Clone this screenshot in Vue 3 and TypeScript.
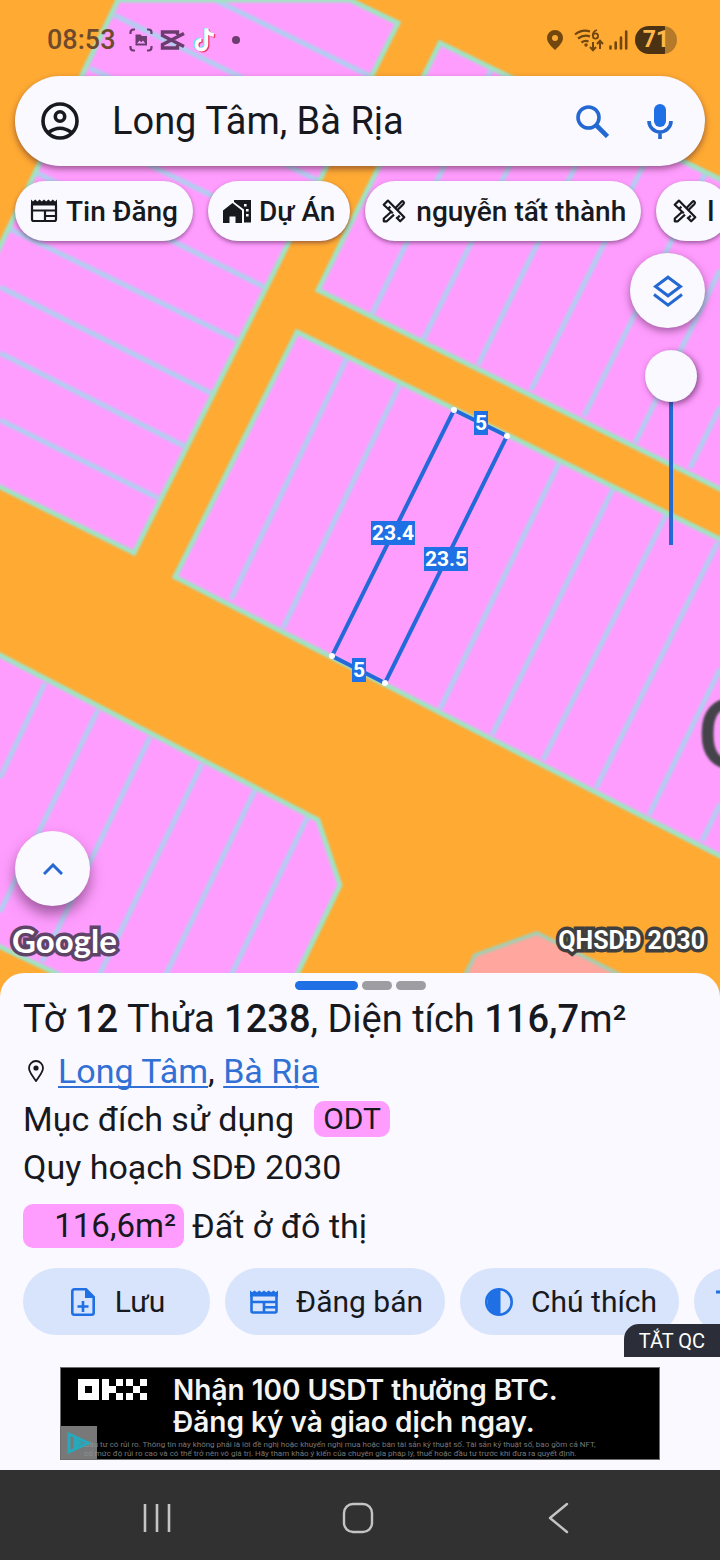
<script setup lang="ts">
import { ref } from 'vue'

type Line = [number, number, number, number]

const place = ref('Long Tâm, Bà Rịa')
const opacity = ref(100)

const filters = [
  { icon: 'news', label: 'Tin Đăng' },
  { icon: 'home', label: 'Dự Án' },
  { icon: 'tools', label: 'nguyễn tất thành' },
  { icon: 'tools', label: 'l' },
]

const blocks = [
  '118,0 350,0 398,23 134,553 -10,482 -10,267',
  '440,43 730,184 730,494 318,290',
  '297,332 730,544 730,861 175,577',
  '-10,650 318,820 340,885 286,997 106,997 -10,942',
]

const parcelLines: Line[] = [
  [0, 420, 158, 498],
  [0, 353, 184, 446],
  [0, 287, 211, 393],
  [10, 229, 237, 340],
  [37, 173, 264, 287],
  [62, 122, 290, 234],
  [90, 68, 317, 180],
  [114, 15, 343, 127],
  [215, 0, 370, 76],
  [372, 314, 492, 68],
  [423, 340, 545, 94],
  [478, 365, 598, 120],
  [531, 390, 653, 146],
  [584, 416, 706, 172],
  [635, 443, 720, 270],
  [690, 468, 720, 407],
  [347, 358, 231, 599],
  [400, 384, 283, 628],
  [559, 463, 440, 709],
  [613, 489, 492, 735],
  [666, 515, 543, 760],
  [718, 542, 596, 788],
  [720, 669, 649, 815],
  [720, 804, 702, 841],
  [45, 683, 0, 778],
  [98, 710, 0, 912],
  [150, 737, 42, 962],
  [202, 764, 92, 990],
  [255, 790, 157, 993],
  [308, 816, 222, 994],
]

const corners = [
  [454, 410],
  [507, 436],
  [385, 683],
  [332, 656],
]

const sideLabels = [
  { text: '5', x: 481, y: 423, w: 14 },
  { text: '23.4', x: 393, y: 533, w: 44 },
  { text: '23.5', x: 446, y: 559, w: 44 },
  { text: '5', x: 359, y: 670, w: 14 },
]
</script>

<template>
  <div class="screen">
    <main class="map">
      <svg class="canvas" viewBox="0 0 720 997" preserveAspectRatio="xMinYMin slice" role="img" aria-label="Bản đồ quy hoạch">
        <rect width="720" height="997" fill="#ffaa33" />
        <g class="plan">
          <polygon v-for="b in blocks" :key="b" :points="b" class="block" />
          <polygon points="454,997 475,955 537,933 664,997" fill="#ffa69e" stroke="#a8cdb0" stroke-width="4" />
          <line v-for="(l, i) in parcelLines" :key="i" :x1="l[0]" :y1="l[1]" :x2="l[2]" :y2="l[3]" class="parcel" />
          <polygon v-for="b in blocks" :key="'e' + b" :points="b" class="edge" />
        </g>
        <text x="697" y="768" class="street">O</text>
        <polygon points="454,410 507,436 385,683 332,656" fill="none" stroke="#2369da" stroke-width="4" />
        <circle v-for="c in corners" :key="c[0]" :cx="c[0]" :cy="c[1]" r="3" fill="#fff" />
        <g v-for="s in sideLabels" :key="s.x">
          <rect :x="s.x - s.w / 2" :y="s.y - 12" :width="s.w" height="24" fill="#1f6fe5" />
          <text :x="s.x" :y="s.y + 7" class="side">{{ s.text }}</text>
        </g>
      </svg>

      <header class="status">
        <span class="clock">08:53</span>
        <svg class="s-capture" viewBox="0 0 24 24" fill="none" stroke="currentColor" stroke-width="2.2">
          <path d="M1.500 6V4.500a3 3 0 0 1 3-3H6M18 1.500h1.500a3 3 0 0 1 3 3V6M22.500 18v1.500a3 3 0 0 1-3 3H18M6 22.500H4.500a3 3 0 0 1-3-3V18" />
          <path d="M6.500 6.500h5l1.500 1.500h5v9.500H6.500z" fill="currentColor" stroke="none" />
          <path d="M8 15.500l2.500-3 1.800 1.800 1.700-1.800 2.300 3z" fill="#ff9dff" stroke="none" />
        </svg>
        <svg class="s-capcut" viewBox="0 0 24 20" fill="none" stroke="currentColor" stroke-width="3.400">
          <path d="M17 5V2H2v3.500l21.500 11M17 15v3H2v-3.500L23.500 3.500" />
        </svg>
        <svg class="s-tiktok" viewBox="0 0 24 26" fill="none" stroke-width="3.600">
          <path d="M13.200 1.500v15.500a4.700 4.700 0 1 1-4.700-4.700M13.200 1.500q.8 5.500 7.300 6.300" stroke="#5fe6ea" transform="translate(-.8 -.6)" />
          <path d="M14.200 1.500v15.500a4.700 4.700 0 1 1-4.700-4.700M14.200 1.500q.8 5.500 7.300 6.300" stroke="#ee3e68" transform="translate(.8 1)" />
          <path d="M13.700 1.500v15.500a4.700 4.700 0 1 1-4.700-4.700M13.700 1.500q.8 5.500 7.300 6.300" stroke="#fff" />
        </svg>
        <i class="dot"></i>
        <div class="sys">
          <svg class="s-pin" viewBox="0 0 16 20" fill="currentColor"><path fill-rule="evenodd" d="M8 0a8 8 0 0 0-8 8c0 5 5.500 9.500 8 12 2.500-2.500 8-7 8-12a8 8 0 0 0-8-8zm0 5a3 3 0 1 1 0 6 3 3 0 0 1 0-6z" /></svg>
          <svg class="s-wifi" viewBox="0 0 30 24" fill="none" stroke="currentColor" stroke-width="2.200">
            <path d="M1 6.500Q8 1 16 3.500M4 10.500q6-4.500 12-2M7.500 14.500q3.500-2.500 7-1" />
            <circle cx="12" cy="17" r="1.700" fill="currentColor" stroke="none" />
            <circle cx="21.500" cy="8" r="2.600" stroke-width="1.800" /><path d="M23 2q-4.500 1.500-4.200 6" stroke-width="1.800" />
            <path d="M19 14v8M16 19l3 3.200 3-3.200M26 21v-8M23 16l3-3.200 3 3.200" stroke-width="2" />
          </svg>
          <svg class="s-signal" viewBox="0 0 19 20" stroke="currentColor" stroke-width="2.600" stroke-linecap="round"><path d="M1.500 18.500v-2M6.700 18.500v-6M12 18.500v-11M17.200 18.500v-17" /></svg>
          <span class="battery">71</span>
        </div>
      </header>

      <form class="search" role="search" @submit.prevent>
        <button type="button" class="plain" aria-label="Tài khoản">
          <svg class="i-user" viewBox="0 0 38 38" fill="none" stroke="#17191e" stroke-width="3.600">
            <circle cx="19" cy="19" r="17" /><circle cx="19" cy="14.500" r="4.700" /><path d="M7.500 30.500q11.500-8.500 23 0" />
          </svg>
        </button>
        <input v-model="place" class="query" type="text" aria-label="Tìm kiếm" />
        <button type="submit" class="plain" aria-label="Tìm">
          <svg class="i-search" viewBox="0 0 33 33" fill="none" stroke="#2468d2" stroke-width="3.600"><circle cx="12.500" cy="12.500" r="10.500" /><path d="M20 20l11.500 11.500" stroke-width="4.600" /></svg>
        </button>
        <button type="button" class="plain" aria-label="Giọng nói">
          <svg class="i-mic" viewBox="0 0 26 35" fill="none" stroke="#2468d2" stroke-width="3.600"><rect x="7" width="12" height="23" rx="6" fill="#1f6fe5" stroke="none" /><path d="M2 17a11 11 0 0 0 22 0M13 28v7" /></svg>
        </button>
      </form>

      <nav class="filters" aria-label="Bộ lọc">
        <button v-for="(f, i) in filters" :key="i" type="button" class="filter">
          <svg v-if="f.icon === 'news'" class="i-chip" viewBox="0 0 28 24" fill="none" stroke="currentColor" stroke-width="2.200">
            <path d="M2 5.500v14.800q0 1.700 1.700 1.700h20.600q1.700 0 1.700-1.700V5.500M2 11.500h24M15 17h11M15 11.500V22" />
            <path d="M1 .6l2 1.800L5.200.6l2.200 1.800L9.600.6l2.200 1.800L14 .6l2.200 1.800L18.400.6l2.200 1.800L22.800.6 25 2.400l2-1.800V6.500H1z" fill="currentColor" stroke="none" />
          </svg>
          <svg v-else-if="f.icon === 'home'" class="i-chip" viewBox="0 0 28 24" fill="currentColor">
            <path d="M0 11.500L9.500 4 19 11.500V24h-6.500v-6.500h-6V24H0z" />
            <path fill-rule="evenodd" d="M11 1h17v22.500h-7V10.500L11 3zM21 5h2.600v2.500H21zM23 10h2.600v2.500H23zM23 15h2.600v2.500H23z" />
          </svg>
          <svg v-else class="i-tools" viewBox="0 0 24 24" fill="none" stroke="currentColor" stroke-width="2.200" stroke-linejoin="round">
            <path d="M9 13L1.800 19.500v2.800h3L12 15.600M13.500 9l6-6.300q1-.9 2 0t0 2.200L15 11.500" />
            <path d="M10.800 14.300L1.700 5.700 5.900 1.600l16.400 16.600-4.100 4.100-4-4M6.200 9.800l2.200-2.200M15.600 18.800l2.200-2.200" />
          </svg>
          {{ f.label }}
        </button>
      </nav>

      <div class="controls">
        <button type="button" class="round" aria-label="Lớp bản đồ">
          <svg class="i-layers" viewBox="0 0 30 32" fill="none" stroke="#2468d2" stroke-width="3"><path d="M15 2.200L27.500 11.500 15 20.800 2.500 11.500zM1 19.500l14 10.600L29 19.500" /></svg>
        </button>
        <input v-model.number="opacity" class="slider" type="range" min="0" max="100" aria-label="Độ trong suốt" />
      </div>

      <button type="button" class="round expand" aria-label="Mở rộng">
        <svg class="i-up" viewBox="0 0 20 12" fill="none" stroke="#2468d2" stroke-width="3"><path d="M1 11l9-9 9 9" /></svg>
      </button>
      <div class="credits">
        <span class="google">Google</span>
        <span class="layer-name">QHSDĐ 2030</span>
      </div>
    </main>

    <section class="sheet">
      <div class="pager"><i class="on"></i><i></i><i></i></div>
      <h1 class="title">Tờ <b>12</b> Thửa <b>1238</b>, Diện tích <b>116,7</b>m²</h1>
      <p class="row address">
        <svg class="i-place" viewBox="0 0 16 22" fill="none" stroke="#17191e" stroke-width="1.800"><path d="M8 1a7 7 0 0 0-7 7c0 4.500 4.500 9 7 13 2.500-4 7-8.500 7-13a7 7 0 0 0-7-7z" /><circle cx="8" cy="8" r="2.600" fill="#17191e" stroke="none" /></svg>
        <span><a href="#long-tam">Long Tâm</a>, <a href="#ba-ria">Bà Rịa</a></span>
      </p>
      <p class="row use">Mục đích sử dụng <span class="tag">ODT</span></p>
      <p class="row">Quy hoạch SDĐ 2030</p>
      <p class="row zone"><span class="area">116,6m²</span> Đất ở đô thị</p>

      <div class="actions">
        <button type="button" class="action save">
          <svg class="i-file" viewBox="0 0 24 28" fill="none" stroke="#1f6fe5" stroke-width="2.600"><path d="M3.500 1.300H15L22.700 9v15.500q0 2.200-2.200 2.200h-17q-2.200 0-2.200-2.200v-21q0-2.200 2.200-2.200z" /><path d="M14 1v9h9z" fill="#1f6fe5" stroke="none" /><path d="M12 13v11M6.500 18.500h11" /></svg>
          Lưu
        </button>
        <button type="button" class="action">
          <svg class="i-post" viewBox="0 0 28 24" fill="none" stroke="#1f6fe5" stroke-width="2.600">
            <path d="M1.500 5.500v15.500q0 1.500 1.500 1.500h22q1.500 0 1.500-1.500V5.500M1.500 12h25M14 17.200h12.500M14 12v10.500" />
            <path d="M0 .6l2.200 1.600L4.500.6l2.400 1.600L9.300.6l2.300 1.600L14 .6l2.300 1.600L18.700.6l2.400 1.600L23.500.6l2.300 1.600L28 .6V6.500H0z" fill="#1f6fe5" stroke="none" />
          </svg>
          Đăng bán
        </button>
        <button type="button" class="action">
          <svg class="i-half" viewBox="0 0 28 28"><circle cx="14" cy="14" r="12.700" fill="none" stroke="#1f6fe5" stroke-width="2.600" /><path d="M15.500 1v26A13 13 0 1 1 15.500 1z" fill="#1f6fe5" /></svg>
          Chú thích
        </button>
        <button type="button" class="action more" aria-label="Thêm">
          <svg class="i-half" viewBox="0 0 28 28" fill="none" stroke="#1f6fe5" stroke-width="3"><path d="M-3 4h31M14 4v22" /></svg>
        </button>
      </div>

      <div class="ad-slot">
        <button type="button" class="ad-off">TẮT QC</button>
        <a class="ad" href="#okx">
          <svg class="okx" viewBox="0 0 69 21" fill="#fff" role="img" aria-label="OKX">
            <path fill-rule="evenodd" d="M0 0h21v21H0zM7 7h7v7H7z" />
            <path d="M24 0h7v7h7v7h-7v7h-7zM38 0h7v7h-7zM38 14h7v7h-7zM48 0h7v7h-7zM62 0h7v7h-7zM55 7h7v7h-7zM48 14h7v7h-7zM62 14h7v7h-7z" />
          </svg>
          <strong class="pitch">Nhận 100 USDT thưởng BTC.<br />Đăng ký và giao dịch ngay.</strong>
          <small class="fine">Đầu tư có rủi ro. Thông tin này không phải là lời đề nghị hoặc khuyến nghị mua hoặc bán tài sản kỹ thuật số. Tài sản kỹ thuật số, bao gồm cả NFT,<br />có mức độ rủi ro cao và có thể trở nên vô giá trị. Hãy tham khảo ý kiến của chuyên gia pháp lý, thuế hoặc đầu tư trước khi đưa ra quyết định.</small>
          <span class="choices">
            <svg class="i-choices" viewBox="0 0 24 24" fill="none" stroke="#26a9bd" stroke-width="3"><path d="M2 3v18l19-9zM8 9v6l5-3z" /></svg>
          </span>
        </a>
      </div>
    </section>

    <nav class="keys" aria-label="Điều hướng">
      <button type="button" class="plain" aria-label="Gần đây"><svg class="i-key" viewBox="0 0 32 32" fill="none" stroke="#c4c4c4" stroke-width="2.600"><path d="M4 2v28M16 2v28M28 2v28" /></svg></button>
      <button type="button" class="plain" aria-label="Trang chủ"><svg class="i-key" viewBox="0 0 32 32" fill="none" stroke="#c4c4c4" stroke-width="2.400"><rect x="2" y="2" width="28" height="28" rx="9" /></svg></button>
      <button type="button" class="plain" aria-label="Quay lại"><svg class="i-key" viewBox="0 0 32 32" fill="none" stroke="#c4c4c4" stroke-width="2.400" stroke-linecap="round" stroke-linejoin="round"><path d="M24 2L7 16l17 14" /></svg></button>
    </nav>
  </div>
</template>

<style>
body { margin: 0; }
</style>

<style scoped>
.screen {
  display: flex;
  flex-direction: column;
  min-height: 100vh;
  overflow: hidden;
  font-family: Roboto, "Noto Sans", sans-serif;
  color: #17191e;
  background: #faf9ff;
}
.screen *, .screen *::before { box-sizing: border-box; }
svg { display: block; flex: none; }
button { font: inherit; color: inherit; border: 0; padding: 0; cursor: pointer; }
.plain { background: none; display: grid; place-items: center; }

.map {
  position: relative;
  flex: 1;
  display: flex;
  flex-direction: column;
  padding-bottom: 36px;
  overflow: hidden;
}
.canvas { position: absolute; inset: 0; width: 100%; height: 100%; }
.map > :not(.canvas) { position: relative; }
.plan { filter: blur(1px); }
.block { fill: #ff9dff; }
.edge { fill: none; stroke: #a2e2c4; stroke-width: 5; }
.parcel { stroke: #b3cdf0; stroke-width: 5; }
.street { font-size: 96px; font-weight: 500; fill: #45434a; filter: blur(1px); }
.side { font-size: 21px; font-weight: 700; fill: #fff; text-anchor: middle; }

.status {
  display: flex;
  align-items: center;
  height: 76px;
  padding: 4px 43px 0 47px;
  color: #6b3c6e;
}
.clock { font-size: 27px; font-weight: 500; color: #6e4a2c; margin-right: 13px; }
.s-capture { width: 24px; height: 24px; margin-right: 7px; }
.s-capcut { width: 25px; height: 20px; margin-right: 7px; }
.s-tiktok { width: 25px; height: 27px; margin-right: 15px; }
.dot { width: 8px; height: 8px; border-radius: 50%; background: currentColor; }
.sys { display: flex; align-items: center; margin-left: auto; color: #72470f; }
.s-pin { width: 16px; height: 20px; margin-right: 11px; }
.s-wifi { width: 30px; height: 24px; margin-right: 5px; }
.s-signal { width: 19px; height: 20px; margin-right: 7px; }
.battery {
  width: 42px;
  height: 28px;
  border-radius: 14px;
  background: linear-gradient(90deg, #4b3212 72%, #b47a2a 72%);
  color: #ffb84d;
  font-size: 23px;
  font-weight: 700;
  line-height: 28px;
  text-align: center;
}

.search {
  display: flex;
  align-items: center;
  height: 90px;
  margin: 0 15px;
  padding: 0 32px 0 26px;
  border-radius: 45px;
  background: #faf9ff;
  box-shadow: 0 3px 6px rgba(60, 20, 40, .5);
}
.i-user { width: 38px; height: 38px; }
.query {
  flex: 1;
  min-width: 0;
  margin-left: 33px;
  padding: 0;
  border: 0;
  outline: 0;
  background: none;
  color: inherit;
  font: 400 38px Roboto, "Noto Sans", sans-serif;
}
.i-search { width: 33px; height: 33px; margin-right: 38px; }
.i-mic { width: 26px; height: 35px; }

.filters { display: flex; gap: 15px; margin: 15px 0 12px; padding-left: 15px; }
.filter {
  display: flex;
  align-items: center;
  flex: none;
  gap: 8px;
  height: 60px;
  padding: 0 15px;
  border-radius: 30px;
  background: #faf9ff;
  box-shadow: 0 2px 4px rgba(60, 20, 60, .5);
  font-size: 28px;
  font-weight: 500;
  white-space: nowrap;
}
.i-chip { width: 28px; height: 24px; }
.i-tools { width: 24px; height: 24px; margin: 0 2px; }

.controls { display: flex; flex-direction: column; align-items: flex-end; gap: 22px; padding-right: 15px; }
.round {
  display: grid;
  place-items: center;
  width: 75px;
  height: 75px;
  border-radius: 50%;
  background: #faf9ff;
  box-shadow: 0 3px 8px rgba(60, 20, 60, .5);
}
.i-layers { width: 30px; height: 32px; }
.slider {
  writing-mode: vertical-lr;
  direction: rtl;
  appearance: none;
  width: 52px;
  height: 195px;
  margin: 0 8px 0 0;
  background: linear-gradient(#2468d2, #2468d2) center / 4px 100% no-repeat;
}
.slider::-webkit-slider-thumb {
  appearance: none;
  width: 52px;
  height: 52px;
  border-radius: 50%;
  background: #faf9ff;
  box-shadow: 2px 2px 6px rgba(60, 20, 60, .6);
}
.expand { margin: auto 0 0 15px; box-shadow: 0 8px 14px rgba(60, 20, 60, .5); }
.i-up { width: 20px; height: 12px; }
.credits {
  display: flex;
  align-items: center;
  justify-content: space-between;
  height: 55px;
  padding: 13px 15px 0 12px;
  color: #fff;
}
.google, .layer-name { paint-order: stroke fill; -webkit-text-stroke: 7px #403f40; }
.google { font: 700 33px Lato, sans-serif; -webkit-text-stroke-color: #5f4468; }
.layer-name { font-size: 25px; font-weight: 700; }

.sheet {
  position: relative;
  display: flex;
  flex-direction: column;
  margin-top: -24px;
  padding: 8px 0 10px;
  border-radius: 24px 24px 0 0;
  background: #faf9ff;
}
.pager { display: flex; justify-content: center; gap: 4px; height: 9px; margin-bottom: 1px; }
.pager i { width: 30px; border-radius: 5px; background: #9e9da2; }
.pager .on { width: 63px; background: #1f6fe5; }
.title { margin: 0; padding-left: 23px; font-size: 38px; font-weight: 400; line-height: 56px; white-space: nowrap; }
.title b { font-weight: 500; }
.row { margin: 0; padding-left: 23px; font-size: 34px; line-height: 48px; white-space: nowrap; }
.address { display: flex; align-items: center; gap: 14px; padding-left: 28px; }
.i-place { width: 16px; height: 22px; }
.address a { color: #3170d4; text-decoration-thickness: 2px; text-underline-offset: 3px; text-decoration-skip-ink: none; }
.use { display: flex; align-items: center; gap: 20px; }
.tag { padding: 0 9px; border-radius: 10px; background: #ff9dff; font-size: 30px; line-height: 36px; }
.zone { display: flex; align-items: center; gap: 8px; margin-top: 13px; line-height: 44px; }
.area { min-width: 161px; padding-right: 8px; border-radius: 10px; background: #ff9dff; font-size: 33px; text-align: right; }

.actions { display: flex; gap: 15px; margin-top: 20px; padding-left: 23px; overflow: hidden; }
.action {
  display: flex;
  flex: none;
  align-items: center;
  justify-content: center;
  gap: 18px;
  height: 67px;
  padding: 0 22px 0 25px;
  border-radius: 34px;
  background: #d7e4fb;
  font-size: 30px;
}
.save { width: 187px; gap: 20px; }
.i-file { width: 24px; height: 28px; }
.i-post { width: 28px; height: 24px; }
.i-half { width: 28px; height: 28px; overflow: visible; }

.ad-slot { position: relative; display: flex; justify-content: center; padding: 32px 60px 0; }
.ad-off {
  position: absolute;
  right: 0;
  top: -11px;
  height: 33px;
  padding: 0 15px;
  border-radius: 15px 0 0 0;
  background: #2b2e39;
  color: #fff;
  font-size: 20px;
}
.ad {
  position: relative;
  display: grid;
  grid-template-columns: 95px 1fr;
  flex: 1;
  height: 93px;
  padding: 6px 17px 0;
  border: 1px solid #6d6d6d;
  background: #000;
  color: #f4f4f4;
  text-decoration: none;
  overflow: hidden;
}
.okx { width: 69px; height: 21px; margin-top: 5px; }
.pitch { font: 600 28px/32px Inter, Roboto, sans-serif; white-space: nowrap; }
.fine { grid-column: 1 / 3; font-size: 8px; line-height: 9px; color: #777; white-space: nowrap; padding-left: 6px; }
.choices { position: absolute; left: 0; bottom: 0; width: 36px; height: 33px; display: grid; place-items: center; background: rgba(150, 150, 150, .8); }
.i-choices { width: 24px; height: 24px; }

.keys { display: flex; justify-content: space-around; align-items: center; height: 90px; padding: 6px 60px 0 56px; background: #313131; }
.i-key { width: 32px; height: 32px; }
</style>
